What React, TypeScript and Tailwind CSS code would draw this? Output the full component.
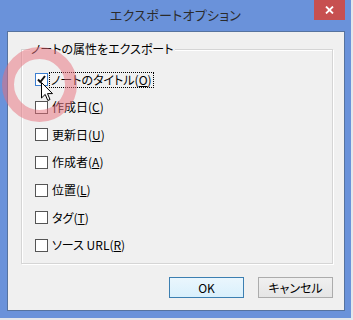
import React from "react";

const ITEMS = [
  { label: "ノートのタイトル", key: "O", checked: true },
  { label: "作成日", key: "C", checked: false },
  { label: "更新日", key: "U", checked: false },
  { label: "作成者", key: "A", checked: false },
  { label: "位置", key: "L", checked: false },
  { label: "タグ", key: "T", checked: false },
  { label: "ソース URL", key: "R", checked: false },
];

const font = {
  fontFamily: "'Noto Sans CJK JP', 'Noto Sans', sans-serif",
};

function CheckBox({ checked }: { checked: boolean }) {
  return (
    <span
      className={
        checked
          ? "relative w-[13px] h-[13px] shrink-0 border border-[#3c7fd1] bg-white"
          : "relative w-[13px] h-[13px] shrink-0 border border-[#555] bg-white"
      }
    >
      {checked && (
        <svg width="11" height="11" viewBox="0 0 11 11" className="absolute left-0 top-0">
          <path d="M2 5.5 L4.3 8 L9 2" stroke="#111" strokeWidth="2" fill="none" />
        </svg>
      )}
    </span>
  );
}

export default function App() {
  return (
    <div
      className="relative w-[353px] h-[320px] bg-[#e4e7eb] overflow-hidden [font-feature-settings:'palt']"
      style={font}
    >
      {/* window frame */}
      <div className="relative w-[351px] h-[318px] bg-[#6a92da] flex flex-col">
        {/* title bar */}
        <div className="h-[31px] flex items-center justify-center pb-[2px]">
          <span className="text-[13px] text-[#2b2b2b] tracking-[0.3px]">エクスポートオプション</span>
        </div>
        <button className="absolute right-[6px] top-0 w-[31px] h-[20px] bg-[#c75050] flex items-center justify-center">
          <svg width="9" height="8" viewBox="0 0 9 8">
            <path d="M1 0.5 L8 7.5 M8 0.5 L1 7.5" stroke="white" strokeWidth="1.8" />
          </svg>
        </button>

        {/* client area */}
        <div className="ml-[7px] mr-[6px] h-[280px] bg-[#f0f0f0] border border-[#56739f] flex flex-col">
          {/* group box */}
          <div className="relative mt-[17px] ml-[13px] w-[312px] h-[215px] border border-[#d5d5d5] shadow-[inset_1px_1px_0_#fff,1px_1px_0_#fff]">
            <span className="absolute left-[8px] top-[-9px] bg-[#f0f0f0] px-[1px] text-[12px] leading-[16px] text-black">
              ノートの属性をエクスポート
            </span>
            <div className="flex flex-col gap-[14.67px] pt-[23px] pl-[13px]">
              {ITEMS.map((it) => (
                <div key={it.key} className="flex items-center h-[13px]">
                  <CheckBox checked={it.checked} />
                  <span
                    className={
                      it.checked
                        ? "ml-[1px] px-[1px] border border-dotted border-black text-[12px] leading-[14px] text-black whitespace-nowrap"
                        : "ml-[2px] px-[1px] border border-transparent text-[12px] leading-[14px] text-black whitespace-nowrap"
                    }
                  >
                    {it.label}(<span className="underline">{it.key}</span>)
                  </span>
                </div>
              ))}
            </div>
          </div>

          {/* buttons */}
          <div className="flex justify-end gap-[14px] mt-[13px] mr-[11px]">
            <button className="w-[75px] h-[21px] border border-[#3c7fb1] bg-gradient-to-b from-[#eaf6fd] to-[#d9f0fc] text-[12px] text-black">
              OK
            </button>
            <button className="w-[75px] h-[21px] border border-[#acacac] bg-gradient-to-b from-[#f0f0f0] to-[#e5e5e5] text-[12px] text-black">
              キャンセル
            </button>
          </div>
        </div>
      </div>

      {/* click highlight ring */}
      <div className="absolute left-[2px] top-[47px] w-[75px] h-[75px] rounded-full border-[12px] border-[rgba(232,110,122,0.5)]" />

      {/* mouse pointer */}
      <svg
        width="13"
        height="20"
        viewBox="0 0 13 20"
        className="absolute left-[41px] top-[82px]"
      >
        <path
          d="M0.5 0.5 L0.5 16 L4.2 12.4 L6.8 18.5 L9 17.5 L6.5 11.6 L11.5 11.6 Z"
          fill="white"
          stroke="black"
          strokeWidth="1"
          strokeLinejoin="miter"
        />
      </svg>
    </div>
  );
}
